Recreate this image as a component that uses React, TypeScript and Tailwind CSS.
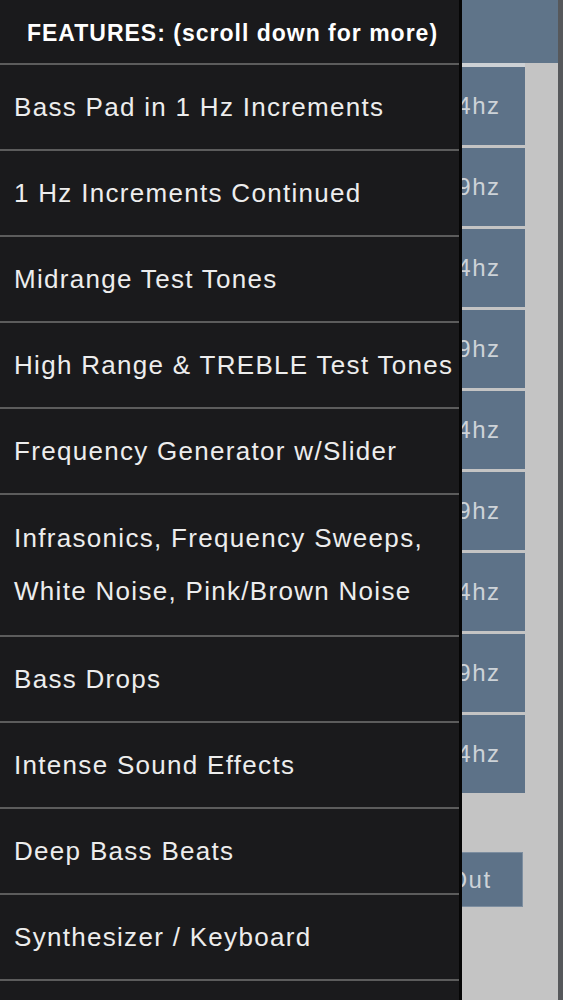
import React from "react";

const features: string[][] = [
  ["Bass Pad in 1 Hz Increments"],
  ["1 Hz Increments Continued"],
  ["Midrange Test Tones"],
  ["High Range & TREBLE Test Tones"],
  ["Frequency Generator w/Slider"],
  ["Infrasonics, Frequency Sweeps,", "White Noise, Pink/Brown Noise"],
  ["Bass Drops"],
  ["Intense Sound Effects"],
  ["Deep Bass Beats"],
  ["Synthesizer / Keyboard"],
];

export default function App() {
  const rows = Array.from({ length: 9 }, (_, i) => i);
  const cols = Array.from({ length: 5 }, (_, j) => j);
  return (
    <div
      className="relative w-[563px] h-[1000px] overflow-hidden bg-[#c4c4c4] flex"
      style={{ fontFamily: '"Liberation Sans", Arial, sans-serif' }}
    >
      {/* main content underneath */}
      <div className="w-[558px] flex flex-col">
        <div className="h-[63px] bg-[#5f7489] shrink-0" />
        <div className="h-[4px] bg-[#cdd1d5] w-[525px] shrink-0" />
        <div className="pl-[3px] flex flex-col gap-[3px]">
          {rows.map((i) => (
            <div key={i} className="grid grid-cols-[repeat(5,102px)] gap-[3px]">
              {cols.map((j) => (
                <div
                  key={j}
                  className="h-[78px] bg-[#5d7288] flex items-center justify-center pr-[5px] text-[24px] tracking-[1.5px] text-[#cdd3d8]"
                >
                  {j === 4 ? `${20 + i * 5 + j}hz` : ""}
                </div>
              ))}
            </div>
          ))}
        </div>
        <div className="mt-[59px] flex justify-end w-[523px]">
          <div className="w-[100px] h-[55px] bg-[#5d7288] border border-[#7d8ea0] flex items-center justify-center pr-[6px] text-[24px] tracking-[1.5px] text-[#cdd3d8]">
            Out
          </div>
        </div>
      </div>
      <div className="w-[5px] bg-[#56585b]" />

      {/* drawer overlay */}
      <div className="absolute left-0 top-0 w-[462px] h-[1000px] bg-[#1a1a1c] border-r-[3px] border-[#060606] overflow-hidden">
        <div className="h-[65px] border-b-2 border-[#5c5c5c] flex items-center justify-center pt-[3px] pl-[6px]">
          <span className="text-white font-bold text-[23px] tracking-[1px] whitespace-nowrap">
            FEATURES: (scroll down for more)
          </span>
        </div>
        {features.map((lines, idx) => (
          <div
            key={idx}
            className={`${lines.length > 1 ? "h-[142px]" : "h-[86px]"} border-b-2 border-[#5c5c5c] flex flex-col justify-center pl-[14px] text-[#ededed] text-[26px] tracking-[1.3px] whitespace-nowrap`}
          >
            {lines.map((l, k) => (
              <div key={k} className={lines.length > 1 ? "leading-[53px]" : "leading-[30px]"}>
                {l}
              </div>
            ))}
          </div>
        ))}
      </div>
    </div>
  );
}
